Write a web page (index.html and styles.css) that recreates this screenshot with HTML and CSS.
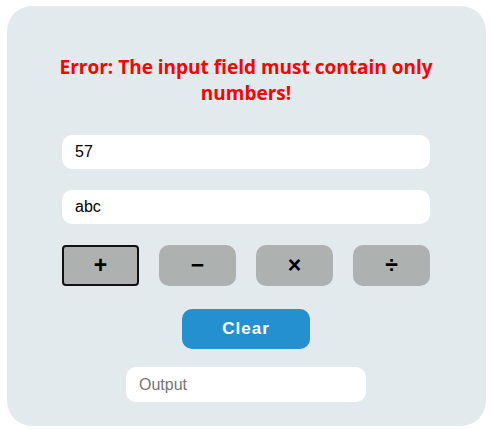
FILE: index.html
```html
<!DOCTYPE html>
<html>
<head>
<meta charset="utf-8">
<link rel="stylesheet" href="styles.css">
</head>
<body>
<div class="card">
  <h2 class="error">Error: The input field must contain only numbers!</h2>
  <input class="field" type="text" value="57">
  <input class="field" type="text" value="abc">
  <div class="ops">
    <button class="op focused">+</button>
    <button class="op">&minus;</button>
    <button class="op">&times;</button>
    <button class="op">&divide;</button>
  </div>
  <div class="clear-row"><button class="clear">Clear</button></div>
  <div class="out-row"><input class="output" type="text" placeholder="Output"></div>
</div>
</body>
</html>
```
FILE: styles.css
```css
html, body {
  margin: 0;
  padding: 0;
  background: #ffffff;
}
.card {
  box-sizing: border-box;
  margin: 6px 0 0 7px;
  width: 479px;
  height: 420px;
  background: #e3eaed;
  border-radius: 25px;
  padding: 48px 56px 0 55px;
  display: flex;
  flex-direction: column;
}
.error {
  margin: 0 -12px 29px -12px;
  color: #ff0000;
  font-family: "Open Sans", "Noto Sans", sans-serif;
  font-weight: 700;
  font-size: 19px;
  line-height: 26px;
  text-align: center;
  letter-spacing: 0;
}
.field {
  box-sizing: border-box;
  height: 34px;
  width: 368px;
  border: none;
  border-radius: 10px;
  background: #ffffff;
  padding: 0 13px;
  font-family: "Liberation Sans", Arial, sans-serif;
  font-size: 16px;
  color: #000;
  margin: 0 0 21px 0;
  outline: none;
}
.ops {
  display: flex;
  gap: 20px;
  width: 368px;
}
.op {
  box-sizing: border-box;
  width: 77px;
  height: 41px;
  border: none;
  border-radius: 10px;
  background: #adb2b0;
  font-family: "Liberation Sans", Arial, sans-serif;
  font-weight: 700;
  font-size: 23px;
  color: #000;
  padding: 0;
}
.op.focused {
  border: 2px solid #111111;
  border-radius: 4px;
}
.clear-row {
  display: flex;
  justify-content: center;
  width: 368px;
  margin-top: 23px;
}
.clear {
  width: 128px;
  height: 40px;
  border: none;
  border-radius: 10px;
  background: #2490d0;
  color: #ffffff;
  font-family: "Liberation Sans", Arial, sans-serif;
  font-weight: 700;
  font-size: 17px;
  letter-spacing: 1px;
  padding: 0;
}
.out-row {
  display: flex;
  justify-content: center;
  width: 368px;
  margin-top: 18px;
}
.output {
  box-sizing: border-box;
  width: 240px;
  height: 35px;
  border: none;
  border-radius: 10px;
  background: #ffffff;
  padding: 0 13px;
  font-family: "Liberation Sans", Arial, sans-serif;
  font-size: 16px;
  outline: none;
}
.output::placeholder {
  color: #757575;
}
```
